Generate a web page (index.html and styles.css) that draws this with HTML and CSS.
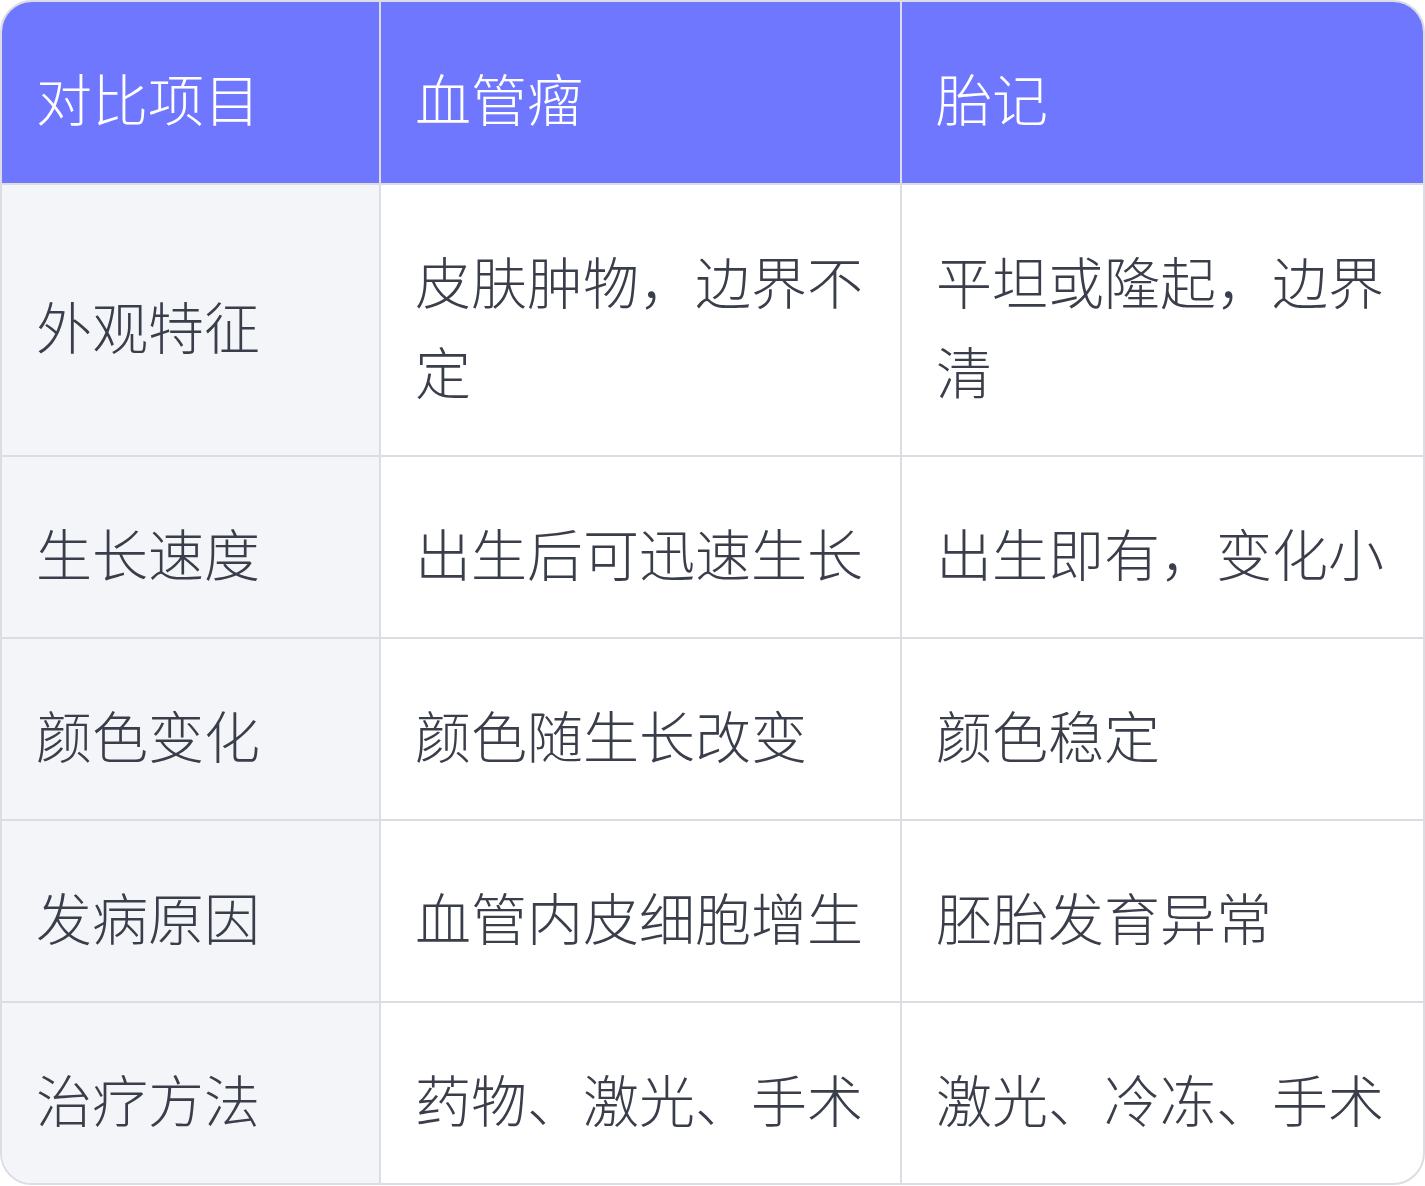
FILE: index.html
```html
<!DOCTYPE html>
<html lang="zh-CN">
<head>
<meta charset="utf-8">
<link rel="stylesheet" href="styles.css">
</head>
<body>
<table class="cmp">
  <thead>
    <tr><th class="c1">对比项目</th><th class="c2">血管瘤</th><th class="c3">胎记</th></tr>
  </thead>
  <tbody>
    <tr><td class="c1">外观特征</td><td class="c2">皮肤肿物，边界不定</td><td class="c3">平坦或隆起，边界清</td></tr>
    <tr><td class="c1">生长速度</td><td class="c2">出生后可迅速生长</td><td class="c3">出生即有，变化小</td></tr>
    <tr><td class="c1">颜色变化</td><td class="c2">颜色随生长改变</td><td class="c3">颜色稳定</td></tr>
    <tr><td class="c1">发病原因</td><td class="c2">血管内皮细胞增生</td><td class="c3">胚胎发育异常</td></tr>
    <tr><td class="c1">治疗方法</td><td class="c2">药物、激光、手术</td><td class="c3">激光、冷冻、手术</td></tr>
  </tbody>
</table>
</body>
</html>
```

FILE: styles.css
```css
html, body {
  margin: 0;
  padding: 0;
  background: #ffffff;
}
.cmp {
  width: 1425px;
  border-collapse: separate;
  border-spacing: 0;
  border: 2px solid #dcdde3;
  border-radius: 32px;
  overflow: hidden;
  table-layout: fixed;
  font-family: "Noto Sans CJK SC", "Noto Sans", sans-serif;
  font-weight: 300;
  font-size: 56px;
  line-height: 90px;
  color: #3a3e4a;
}
.cmp th, .cmp td {
  text-align: left;
  vertical-align: middle;
  padding: 50px 36px 40px 34px;
  border-right: 2px solid #dcdde3;
  border-bottom: 2px solid #dcdde3;
  font-weight: 300;
  word-break: break-all;
}
.cmp th.c1, .cmp td.c1 { width: 307px; }
.cmp th.c2, .cmp td.c2 { width: 449px; }
.cmp th.c3, .cmp td.c3 { border-right: none; }
.cmp tbody tr:last-child td { border-bottom: none; }
.cmp thead th {
  background: #7077ff;
  color: #ffffff;
  padding-bottom: 41px;
}
.cmp td.c1 {
  background: #f4f5f9;
}
```
